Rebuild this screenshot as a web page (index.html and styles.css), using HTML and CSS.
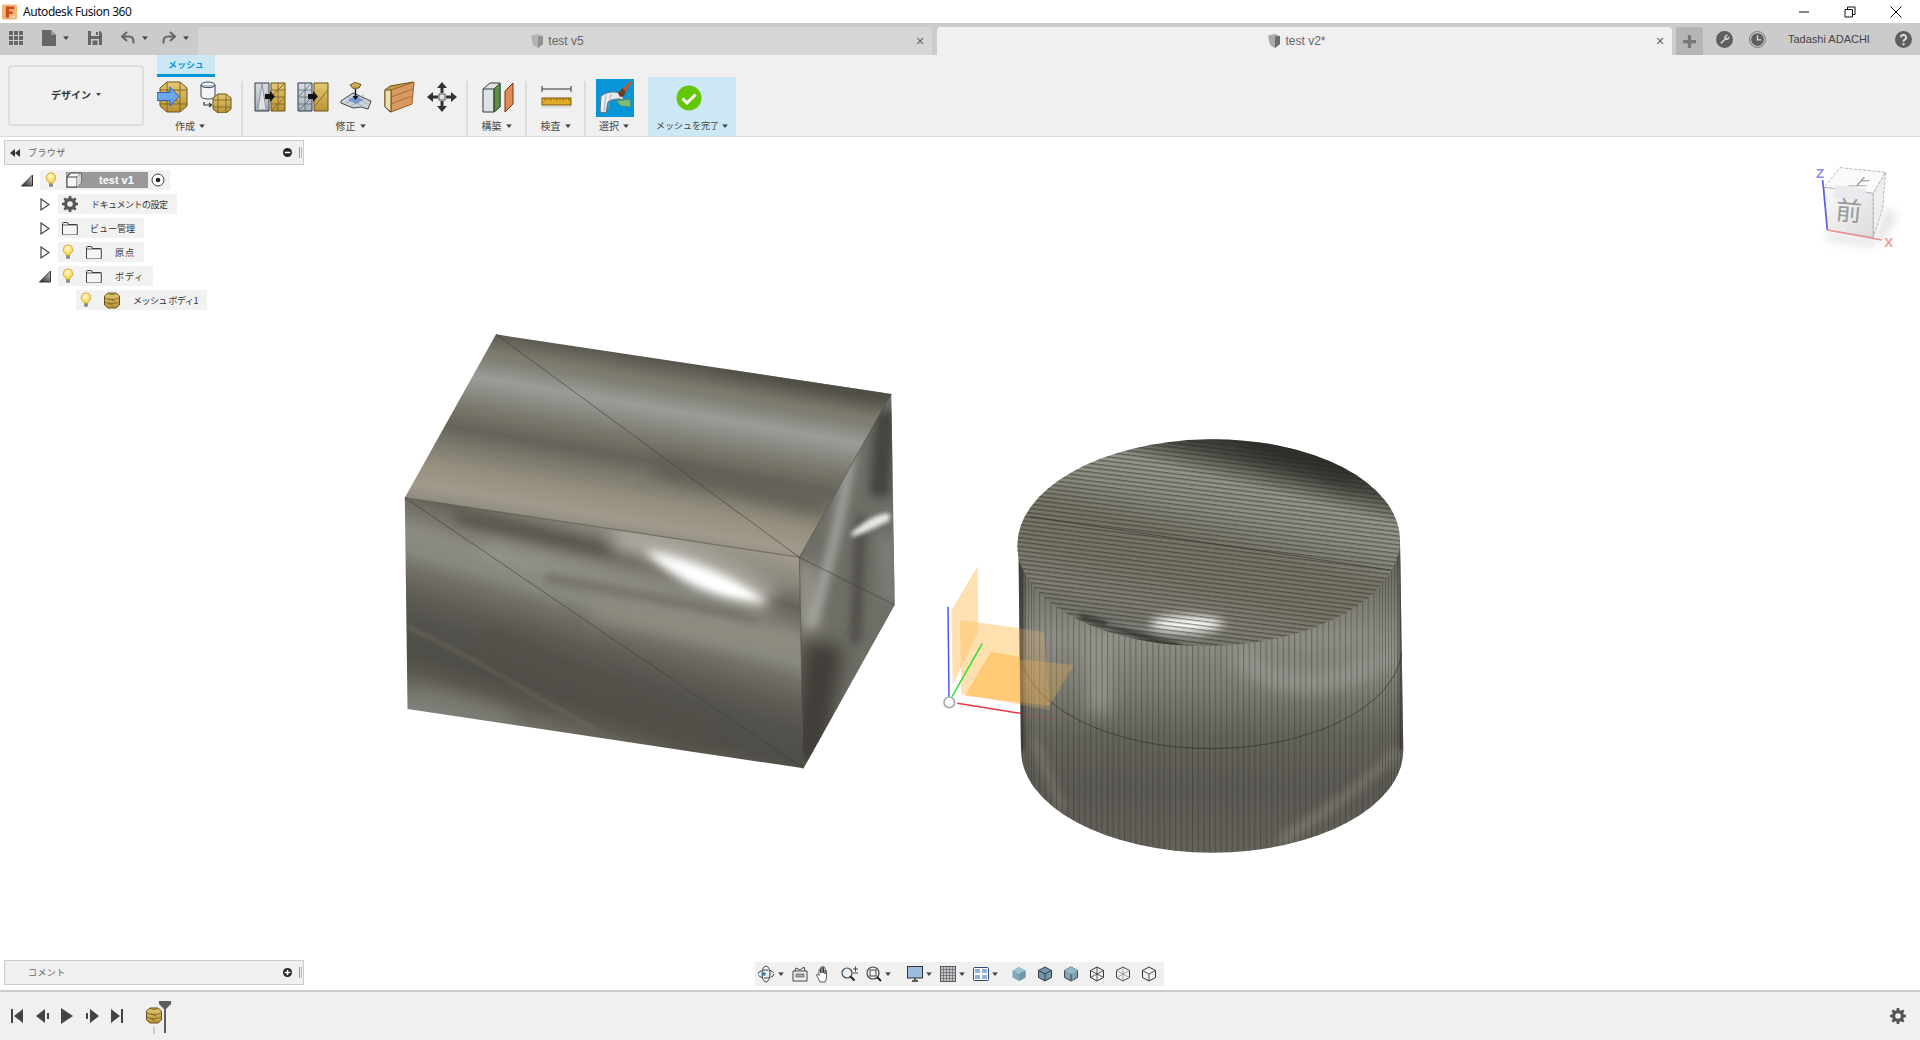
FILE: index.html
```html
<!DOCTYPE html>
<html lang="ja">
<head>
<meta charset="utf-8">
<title>Autodesk Fusion 360</title>
<link rel="stylesheet" href="styles.css">
</head>
<body>
<svg class="defs" width="0" height="0">
  <defs>
    <linearGradient id="gold" x1="0" y1="0" x2="0" y2="1"><stop offset="0" stop-color="#e3c873"/><stop offset="1" stop-color="#bb9338"/></linearGradient>
    <linearGradient id="steel" x1="0" y1="0" x2="0" y2="1"><stop offset="0" stop-color="#d8dde3"/><stop offset="1" stop-color="#a5adb7"/></linearGradient>
    <radialGradient id="bulbg" cx=".45" cy=".35" r=".65"><stop offset="0" stop-color="#fffbd0"/><stop offset="1" stop-color="#f3cc3a"/></radialGradient>
    <symbol id="caret" viewBox="0 0 8 5"><path d="M0 0h8L4 5z" fill="#444"/></symbol>
    <symbol id="bulb" viewBox="0 0 12 16"><path d="M6 .8a4.9 4.9 0 0 0-2.6 9c.5.4.6 1 .6 1.6h4c0-.6.1-1.200.6-1.600A4.900 4.900 0 0 0 6 .8z" fill="url(#bulbg)" stroke="#c9a52a" stroke-width=".8"/><path d="M4 11.500h4v2.200L7 15H5l-1-1.300z" fill="#8d8d8d"/></symbol>
    <symbol id="folder" viewBox="0 0 16 13"><path d="M.5 1.500a1 1 0 0 1 1-1h4l1 2h8a.8.8 0 0 1 .8.800v8.700a1 1 0 0 1-1 1h-12.800a1 1 0 0 1-1-1z" fill="#f4f6f8" stroke="#3d3d3d"/><path d="M.5 3h15" stroke="#3d3d3d" stroke-width=".8"/></symbol>
    <symbol id="tri-open" viewBox="0 0 12 13"><path d="M11.500 1v11H.5z" fill="url(#triFill)" stroke="#333"/></symbol>
    <linearGradient id="triFill" x1="0" y1="1" x2="1" y2="0"><stop offset="0" stop-color="#222"/><stop offset="1" stop-color="#ccc"/></linearGradient>
    <symbol id="tri-closed" viewBox="0 0 10 13"><path d="M1 1l8 5.500L1 12z" fill="#fff" stroke="#444" stroke-width="1.200"/></symbol>
    <symbol id="meshbody" viewBox="0 0 16 17"><path d="M4 1h8l3.500 3v9L12 16H4L.5 13V4z" fill="url(#gold)" stroke="#6b5217"/><path d="M1 6c3 2 11 2 14 0M1 10c3 2 11 2 14 0M4 1c2 2 6 2 8 0" fill="none" stroke="#7a5e1c" stroke-width=".8"/><path d="M5 6.500l6 3M4 11l5 3" stroke="#7a5e1c" stroke-width=".7"/></symbol>
    <symbol id="cubeiso" viewBox="0 0 16 16"><path d="M8 1l6.500 3.500v7L8 15l-6.500-3.500v-7z" fill="none" stroke="#333"/><path d="M1.500 4.500L8 8l6.500-3.500M8 8v7" fill="none" stroke="#333" stroke-width=".8"/></symbol>
  </defs>
</svg>

<header class="titlebar">
  <svg class="logo" viewBox="0 0 16 16" width="15" height="16"><rect width="16" height="16" rx="1" fill="#f3b57c"/><path d="M4 2h9v3H7.500v2.500h4v2.500h-4V14H4z" fill="#c9501a"/><path d="M8 12h6v2H8z" fill="#f7d2ae"/></svg>
  <span class="apptitle">Autodesk Fusion 360</span>
  <div class="winctl">
    <svg viewBox="0 0 12 12" width="12" height="12"><path d="M1 6h10" stroke="#111"/></svg>
    <svg viewBox="0 0 12 12" width="12" height="12"><path d="M1 3.500h7.500V11H1zM3.500 3.500V1H11v7.500H8.500" fill="none" stroke="#111"/></svg>
    <svg viewBox="0 0 12 12" width="12" height="12"><path d="M.5.500l11 11M11.500.5l-11 11" stroke="#111"/></svg>
  </div>
</header>

<nav class="toolbar">
  <div class="qat">
    <svg class="q-grid" viewBox="0 0 14 14" width="14" height="14"><path d="M0 0h4v4H0zM5 0h4v4H5zM10 0h4v4h-4zM0 5h4v4H0zM5 5h4v4H5zM10 5h4v4h-4zM0 10h4v4H0zM5 10h4v4H5zM10 10h4v4h-4z" fill="#666"/></svg>
    <svg class="q-file" viewBox="0 0 14 16" width="14" height="16"><path d="M0 0h9l5 5v11H0z" fill="#666"/><path d="M9 0v5h5" fill="#9a9a9a"/></svg>
    <svg class="q-caret" viewBox="0 0 8 5" width="6" height="4"><use href="#caret"/></svg>
    <svg class="q-save" viewBox="0 0 14 14" width="14" height="14"><path d="M0 0h12l2 2v12H0z" fill="#666"/><path d="M3 0h8v5H3zM3 8h8v6H3z" fill="#cbcbcb"/><path d="M8 1h2v3H8zM4.500 9.500h5v4.500h-5z" fill="#666"/></svg>
    <svg class="q-undo" viewBox="0 0 14 14" width="14" height="14"><path d="M6 1L1 5.500 6 10M1.500 5.500H8c3 0 4.500 2 4.500 5v2" fill="none" stroke="#666" stroke-width="2"/></svg>
    <svg class="q-caret" viewBox="0 0 8 5" width="6" height="4"><use href="#caret"/></svg>
    <svg class="q-redo" viewBox="0 0 14 14" width="14" height="14"><path d="M8 1l5 4.500L8 10M12.500 5.500H6c-3 0-4.500 2-4.500 5v2" fill="none" stroke="#666" stroke-width="2"/></svg>
    <svg class="q-caret" viewBox="0 0 8 5" width="6" height="4"><use href="#caret"/></svg>
  </div>
  <div class="tab">
    <div class="tab-title">
      <svg viewBox="0 0 14 16" width="14" height="16"><path d="M1 2.500L8 1l5 2v8l-5 4-5-3z" fill="#b3b3b3"/><path d="M8 3.500l5-.5v8l-5 4z" fill="#8f8f8f"/></svg>
      <span>test v5</span>
    </div>
    <span class="tab-x">✕</span>
  </div>
  <div class="tab active">
    <div class="tab-title">
      <svg viewBox="0 0 14 16" width="14" height="16"><path d="M1 2.500L8 1l5 2v8l-5 4-5-3z" fill="#a9a9a9"/><path d="M8 3.500l5-.5v8l-5 4z" fill="#6c6c6c"/></svg>
      <span>test v2*</span>
    </div>
    <span class="tab-x">✕</span>
  </div>
  <div class="tool-right">
    <div class="plus"><svg viewBox="0 0 12 12" width="13" height="13"><path d="M6 0v12M0 6h12" stroke="#777" stroke-width="3"/></svg></div>
    <svg class="r-wrench" viewBox="0 0 16 16" width="17" height="17"><circle cx="8" cy="8" r="8" fill="#5e5e5e"/><path d="M11.500 3.500a3 3 0 0 0-3.700 3.800L4 11l1.200 1.200 3.700-3.800a3 3 0 0 0 3.800-3.700L10.500 6.800 9.400 5.700z" fill="#cbcbcb"/></svg>
    <svg class="r-clock" viewBox="0 0 16 16" width="17" height="17"><circle cx="8" cy="8" r="7.500" fill="none" stroke="#666" stroke-width=".8"/><circle cx="8" cy="8" r="6" fill="#5e5e5e"/><path d="M8 4v4.300h3.500" fill="none" stroke="#ddd" stroke-width="1.200"/></svg>
    <span class="username">Tadashi ADACHI</span>
    <svg class="r-help" viewBox="0 0 16 16" width="17" height="17"><circle cx="8" cy="8" r="8" fill="#5e5e5e"/><path d="M5.500 6a2.500 2.300 0 1 1 3.600 2.100C8.300 8.600 8 9 8 10" fill="none" stroke="#ddd" stroke-width="1.800"/><circle cx="8" cy="12.300" r="1.100" fill="#ddd"/></svg>
  </div>
</nav>

<section class="ribbon">
  <button class="design">デザイン<svg viewBox="0 0 8 5" width="5" height="3"><use href="#caret"/></svg></button>
  <div class="ribbon-main">
    <div class="ribbon-tabs"><span class="mesh-tab">メッシュ</span></div>
    <div class="groups">
      <div class="group g-create">
        <div class="icons">
          <svg viewBox="0 0 32 32" width="32" height="32"><path d="M10 1h13l7 6v18l-7 6H10l-7-6V7z" fill="url(#gold)" stroke="#6b5217"/><path d="M10 1v30M23 1v30M3 9h27M3 23h27M10 9l13 14" stroke="#7a5e1c" stroke-width=".9" fill="none"/><path d="M0 11.500h13V6l9 9.500-9 9.500v-5.500H0z" fill="#6ba6f0" stroke="#2f5fae"/></svg>
          <svg viewBox="0 0 32 32" width="32" height="32"><path d="M1 4c0-4 14-4 14 0v11c0 4-14 4-14 0z" fill="#f2f4f6" stroke="#3a4654"/><path d="M1 4c0 3.500 14 3.500 14 0" fill="#b9c4d0" stroke="#3a4654"/><path d="M4 21v3h7M9 22l2.500 2L9 26" fill="none" stroke="#333" stroke-width="1.200"/><path d="M18 13h8l5 4v11l-5 4h-8l-5-4V17z" fill="url(#gold)" stroke="#6b5217"/><path d="M18 13v19M26 13v19M13 19h18M13 26h18" stroke="#7a5e1c" stroke-width=".8"/></svg>
        </div>
        <div class="label">作成<svg viewBox="0 0 8 5" width="6" height="4"><use href="#caret"/></svg></div>
      </div>
      <div class="group g-modify">
        <div class="icons">
          <svg viewBox="0 0 32 32" width="32" height="32"><path d="M1 2h14v28H1z" fill="url(#steel)" stroke="#2e3a47"/><path d="M4 28L8 3l4 25" fill="#dfe3e8" stroke="#7d8791" stroke-width=".8"/><path d="M17 2h14v28H17z" fill="url(#gold)" stroke="#6b5217"/><path d="M17 9h14M17 16h14M17 23h14M24 2v28M17 16l7-7M24 23l7-7M17 30l7-7M24 9l7-7" stroke="#7a5e1c" stroke-width=".8" fill="none"/><path d="M11 13h5v-3l5 5.500-5 5.500v-3h-5z" fill="#111"/></svg>
          <svg viewBox="0 0 32 32" width="32" height="32"><path d="M1 2h14v28H1z" fill="url(#steel)" stroke="#2e3a47"/><path d="M1 9h14M1 16h14M1 23h14M8 2v28M1 16l7-7M8 23l7-7M1 30l7-7M8 9l7-7" stroke="#5f6973" stroke-width=".8" fill="none"/><path d="M17 2h14v28H17z" fill="url(#gold)" stroke="#6b5217"/><path d="M17 26L31 9" stroke="#8d6e22"/><path d="M11 13h5v-3l5 5.500-5 5.500v-3h-5z" fill="#111"/></svg>
          <svg viewBox="0 0 32 32" width="32" height="32"><path d="M1 20l12-8 18 8-3 8-7-2-8 1-12-5z" fill="#cbd2dd" stroke="#444"/><path d="M8 19l7-4 8 4-7 4z" fill="#6c97dd"/><path d="M6 22l18-8M11 25l14-8M8 16l14 9M14 13l13 10" stroke="#8a929e" stroke-width=".6"/><path d="M10 4l5-2.500 6 2-2 3.500-6 .5z" fill="url(#gold)" stroke="#6b5217"/><path d="M15.500 8v9" stroke="#111" stroke-width="1.400"/><path d="M12.500 15h6l-3 4z" fill="#111"/></svg>
          <svg viewBox="0 0 32 32" width="32" height="32"><path d="M2 9l5-4 23-4-2 22-21 8-5-5z" fill="#c99a4d" stroke="#6b5217"/><path d="M8 9l23-8-2 22-21 8z" fill="#d79a60" stroke="#9d5f27"/><path d="M8 16l22-8M8 23l21-8" stroke="#a36a35" stroke-width=".9"/><path d="M2 9l6 0v22l-6-5z" fill="#f0e0b0" stroke="#6b5217"/></svg>
          <svg viewBox="0 0 32 32" width="32" height="32"><path d="M16 1l5 6h-3.500v5h-3V7H11zM16 31l-5-6h3.500v-5h3v5H21zM1 16l6-5v3.500h5v3H7V21zM31 16l-6 5v-3.500h-5v-3h5V11z" fill="#333"/><rect x="13" y="13" width="6" height="6" fill="#dfe3e8" stroke="#555"/></svg>
        </div>
        <div class="label">修正<svg viewBox="0 0 8 5" width="6" height="4"><use href="#caret"/></svg></div>
      </div>
      <div class="group g-build">
        <div class="icons">
          <svg viewBox="0 0 32 32" width="32" height="32"><path d="M1 8l7-6h10v24l-6 5H1z" fill="#dfe3e6" stroke="#2f3a3f"/><path d="M12 8l6-6v24l-6 5z" fill="#5a9048" stroke="#2f5a25"/><path d="M1 8h11v23" fill="none" stroke="#2f3a3f"/><path d="M23 10l8-8v21l-8 8z" fill="#e38b55" stroke="#7a2f10"/></svg>
        </div>
        <div class="label">構築<svg viewBox="0 0 8 5" width="6" height="4"><use href="#caret"/></svg></div>
      </div>
      <div class="group g-inspect">
        <div class="icons">
          <svg viewBox="0 0 32 32" width="32" height="32"><path d="M1 5v6M1 8h29M30 5v6" stroke="#333" fill="none"/><rect x="1" y="17" width="29" height="7" fill="#e0ab25" stroke="#7b5a12"/><path d="M4 17v3M7 17v2M10 17v3M13 17v2M16 17v3M19 17v2M22 17v3M25 17v2M28 17v3" stroke="#7b5a12" stroke-width=".8"/><path d="M1 26h29" stroke="#ddd" stroke-width="2"/></svg>
        </div>
        <div class="label">検査<svg viewBox="0 0 8 5" width="6" height="4"><use href="#caret"/></svg></div>
      </div>
      <div class="group g-select">
        <div class="icons">
          <svg viewBox="0 0 38 38" width="38" height="38"><rect width="38" height="38" fill="#0696d7"/><path d="M20 22l14-2 1 8-10-1z" fill="#7cbc78" stroke="#4a7a4a" stroke-width=".6"/><path d="M5 17c7-5 15-5 20-2l3 6c-5-2-12-1-16 2l-2 11-6-1z" fill="#e8ebef" stroke="#67717b"/><path d="M10 16l-2 16M15 15l-3 16" stroke="#8f99a3" stroke-width=".7"/><path d="M22 14l5-5 3 3-2 5-4 1z" fill="#6a3f1e"/><path d="M27 10l7-8 2 1-6 10z" fill="#c2552e"/></svg>
        </div>
        <div class="label">選択<svg viewBox="0 0 8 5" width="6" height="4"><use href="#caret"/></svg></div>
      </div>
      <div class="group g-finish">
        <div class="icons">
          <svg viewBox="0 0 26 26" width="26" height="26"><circle cx="13" cy="13" r="12.500" fill="#63c606"/><path d="M6.500 13.500l4.500 4.500 8.500-8.500" fill="none" stroke="#fff" stroke-width="3"/></svg>
        </div>
        <div class="label">メッシュを完了<svg viewBox="0 0 8 5" width="6" height="4"><use href="#caret"/></svg></div>
      </div>
    </div>
  </div>
</section>

<main class="viewport">
  <svg class="scene" viewBox="0 137 1920 853" width="1920" height="853">
    <defs>
      <filter id="b6" filterUnits="userSpaceOnUse" x="-100" y="-100" width="1900" height="1700"><feGaussianBlur stdDeviation="6"/></filter>
      <filter id="b14" filterUnits="userSpaceOnUse" x="-100" y="-100" width="1900" height="1700"><feGaussianBlur stdDeviation="14"/></filter>
      <filter id="b26" filterUnits="userSpaceOnUse" x="-100" y="-100" width="1900" height="1700"><feGaussianBlur stdDeviation="26"/></filter>
      <linearGradient id="boxTop" gradientUnits="userSpaceOnUse" x1="0" y1="0" x2="-104.600" y2="581">
        <stop offset="0" stop-color="#56544c"/><stop offset=".08" stop-color="#726f65"/><stop offset=".11" stop-color="#7d7a6c"/><stop offset=".15" stop-color="#807f76"/><stop offset=".25" stop-color="#9a9d97"/><stop offset=".32" stop-color="#8c8d86"/><stop offset=".43" stop-color="#777469"/><stop offset=".52" stop-color="#65635a"/><stop offset=".62" stop-color="#7d7a6e"/><stop offset=".73" stop-color="#96907f"/><stop offset=".84" stop-color="#a09a8c"/><stop offset=".93" stop-color="#8a877a"/>
      </linearGradient>
      <linearGradient id="boxFront" gradientUnits="userSpaceOnUse" x1="0" y1="0" x2="-330" y2="1101">
        <stop offset=".32" stop-color="#a09a8c"/><stop offset=".39" stop-color="#87857a"/><stop offset=".44" stop-color="#66645a"/><stop offset=".49" stop-color="#7c7a70"/><stop offset=".53" stop-color="#8c8b82"/><stop offset=".58" stop-color="#888880"/><stop offset=".63" stop-color="#706e66"/><stop offset=".69" stop-color="#5e5c55"/><stop offset=".75" stop-color="#54524c"/><stop offset=".83" stop-color="#4f4d47"/><stop offset=".88" stop-color="#5a5850"/><stop offset=".925" stop-color="#6e6c62"/><stop offset=".96" stop-color="#7c7d77"/><stop offset="1" stop-color="#8a8c86"/>
      </linearGradient>
      <linearGradient id="cylTop" gradientUnits="userSpaceOnUse" x1="950" y1="60" x2="780" y2="680">
        <stop offset="0" stop-color="#34332f"/><stop offset=".08" stop-color="#4a4943"/><stop offset=".2" stop-color="#929389"/><stop offset=".33" stop-color="#8d8d83"/><stop offset=".5" stop-color="#767467"/><stop offset=".7" stop-color="#787568"/><stop offset=".85" stop-color="#807e74"/><stop offset="1" stop-color="#72726c"/>
      </linearGradient>
      <linearGradient id="cylSide" gradientUnits="userSpaceOnUse" x1="0" y1="400" x2="0" y2="1300">
        <stop offset="0" stop-color="#66655c"/><stop offset=".28" stop-color="#8e8e86"/><stop offset=".44" stop-color="#7f7e75"/><stop offset=".61" stop-color="#65645c"/><stop offset=".78" stop-color="#5c5a54"/><stop offset="1" stop-color="#64625a"/>
      </linearGradient>
      <pattern id="hatchH" patternUnits="userSpaceOnUse" width="60" height="13" patternTransform="rotate(7)"><rect width="60" height="4" fill="#26251f" opacity=".48"/></pattern>
      <pattern id="hatchV" patternUnits="userSpaceOnUse" width="17" height="60"><rect width="3.500" height="60" fill="#26251f" opacity=".32"/></pattern>
      <pattern id="hatchVn" patternUnits="userSpaceOnUse" width="9" height="60"><rect width="3" height="60" fill="#26251f" opacity=".32"/></pattern>
      <clipPath id="clipTop"><path d="M337 73L1485 252 1218 742 72 563z"/></clipPath>
      <clipPath id="clipFront"><path d="M72 563L1218 742 1230 1375 80 1197z"/></clipPath>
      <clipPath id="clipRight"><path d="M1485 252L1495 885 1230 1375 1218 742z"/></clipPath>
      <clipPath id="clipSide"><path d="M295 380L303 990A573.500 308 0 0 0 1450 990L1440 360z"/></clipPath>
      <clipPath id="clipCylTop"><ellipse cx="866" cy="368" rx="574" ry="310" transform="rotate(-1 866 368)"/></clipPath>
      <linearGradient id="cubeFront" x1="0" y1="0" x2="1" y2="1"><stop offset="0" stop-color="#fafafa"/><stop offset="1" stop-color="#dcdcdc"/></linearGradient>
    </defs>

    <g transform="translate(380 310) scale(.3443 .33333)">
      <path d="M337 73L1485 252 1218 742 72 563z" fill="url(#boxTop)"/>
      <path d="M72 563L1218 742 1230 1375 80 1197z" fill="url(#boxFront)"/>
      <path d="M1485 252L1495 885 1230 1375 1218 742z" fill="#6e6d66"/>
      <g clip-path="url(#clipTop)">
        <path d="M1000 140L1480 240" stroke="#4e4c45" stroke-width="70" filter="url(#b26)"/>
        <path d="M800 470L1300 590" stroke="#5f5d53" stroke-width="50" filter="url(#b26)"/>
      </g>
      <g clip-path="url(#clipFront)" fill="none">
        <path d="M220 620L760 745" stroke="#5b5950" stroke-width="36" filter="url(#b14)"/>
        <path d="M300 715L1100 890" stroke="#9b9b94" stroke-width="30" filter="url(#b26)"/>
        <path d="M480 800L1100 930" stroke="#68665d" stroke-width="20" filter="url(#b14)"/>
        <path d="M620 900L1220 1010" stroke="#908d80" stroke-width="50" filter="url(#b26)"/>
        <path d="M80 950C250 1030 450 1160 620 1255" stroke="#8e8b7c" stroke-width="7" opacity=".45" filter="url(#b6)"/>
        <path d="M90 1150C150 1175 260 1180 380 1240" stroke="#85867f" stroke-width="50" opacity=".6" filter="url(#b26)"/>
        <path d="M300 980L950 1300" stroke="#52504a" stroke-width="70" filter="url(#b26)"/>
        <path d="M680 680C850 710 1020 790 1130 870" stroke="#aaa89f" stroke-width="90" filter="url(#b26)"/>
        <path d="M770 720C880 735 1040 800 1125 878 1000 872 870 835 770 720z" fill="#fff" filter="url(#b14)"/>
        <path d="M880 780C950 795 1030 825 1085 862 1000 852 930 825 880 780z" fill="#fff" opacity=".85" filter="url(#b6)"/>
      </g>
      <g clip-path="url(#clipRight)" fill="none">
        <path d="M1290 1000L1240 1370" stroke="#3f3e39" stroke-width="110" filter="url(#b26)"/>
        <path d="M1240 760L1240 960" stroke="#a19e93" stroke-width="50" filter="url(#b26)"/>
        <path d="M1470 300L1450 560" stroke="#45443f" stroke-width="60" filter="url(#b14)"/>
        <path d="M1470 680L1480 870" stroke="#7c7c76" stroke-width="50" filter="url(#b14)"/>
        <path d="M1370 420C1350 560 1320 720 1250 950" stroke="#a8aaa6" stroke-width="26" filter="url(#b14)"/>
        <path d="M1400 620C1390 720 1390 820 1380 1000" stroke="#484742" stroke-width="26" filter="url(#b14)"/>
        <path d="M1370 668C1400 640 1440 610 1480 610L1480 632C1440 650 1410 670 1370 680z" fill="#e8e8e6" filter="url(#b6)"/>
      </g>
      <path d="M337 73L1218 742M72 563L1230 1375M1218 742L1495 885M1485 252L1218 742M72 563L1218 742M1218 742L1230 1375" stroke="#3f3d36" stroke-width="2.400" opacity=".75" fill="none"/>
    </g>

    <g transform="translate(930 560) scale(.33333)">
      <g>
        <path d="M143 18L145 215 68 375 64 152z" fill="#ffcf85" opacity=".65"/>
        <path d="M90 180L342 215 360 450 94 402z" fill="#ffc66e" opacity=".55"/>
        <path d="M182 276L432 315 358 437 105 407z" fill="#ffb94f" opacity=".6"/>
      </g>
      <path d="M54 140L57 410" stroke="#4a5cf0" stroke-width="4.500"/>
      <path d="M157 250L66 410" stroke="#2fe02f" stroke-width="4.500"/>
      <path d="M82 430L380 477" stroke="#f03244" stroke-width="4.500"/>
    </g>

    <g transform="translate(920 420) scale(.33333)">
      <path d="M295 380L303 990A573.500 308 0 0 0 1450 990L1440 360z" fill="url(#cylSide)"/>
      <g clip-path="url(#clipSide)" fill="none">
        <path d="M950 700C1050 800 1200 830 1440 700" stroke="#9a9a94" stroke-width="46" filter="url(#b26)"/>
        <path d="M540 640L540 880" stroke="#96968e" stroke-width="60" filter="url(#b26)"/>
        <path d="M1080 1265C1200 1180 1340 1100 1430 990" stroke="#959284" stroke-width="26" opacity=".55" filter="url(#b14)"/>
        <path d="M340 950C370 1030 400 1100 430 1170" stroke="#959284" stroke-width="20" opacity=".55" filter="url(#b14)"/>
        <path d="M303 430V990" stroke="#2d2c28" stroke-width="14" filter="url(#b6)"/>
        <path d="M1445 400V990" stroke="#2d2c28" stroke-width="10" filter="url(#b6)"/>
        <rect x="340" y="380" width="1030" height="940" fill="url(#hatchV)"/>
        <rect x="290" y="380" width="50" height="900" fill="url(#hatchVn)"/>
        <rect x="1370" y="380" width="90" height="900" fill="url(#hatchVn)"/>
      </g>
      <path d="M300 700A574 308 0 0 0 1445 700" fill="none" stroke="#2f2e29" stroke-width="2.500" opacity=".8"/>
      <ellipse cx="866" cy="368" rx="574" ry="310" transform="rotate(-1 866 368)" fill="url(#cylTop)"/>
      <g clip-path="url(#clipCylTop)" fill="none">
        <path d="M1000 70C1100 90 1220 130 1300 170" stroke="#2f2e2a" stroke-width="50" filter="url(#b26)"/>
        <path d="M480 590C600 620 680 660 780 680" stroke="#3d3c37" stroke-width="18" filter="url(#b6)"/>
        <path d="M560 610C660 620 720 640 850 650" stroke="#8a8b85" stroke-width="12" filter="url(#b6)"/>
        <ellipse cx="800" cy="612" rx="110" ry="24" fill="#fff" filter="url(#b14)"/>
        <rect x="280" y="40" width="1180" height="650" fill="url(#hatchH)"/>
      </g>
      <path d="M330 290L1410 450" stroke="#2b2a26" stroke-width="2.500" opacity=".7" fill="none"/>
    </g>

    <g transform="translate(930 560) scale(.33333)">
      <path d="M266 205L342 215 360 450 266 434z" fill="#ffc66e" opacity=".22"/>
      <path d="M266 298L432 315 358 437 266 426z" fill="#ffb94f" opacity=".26"/>
      <path d="M270 462L380 477" stroke="#f03244" stroke-width="2" opacity=".4"/>
      <circle cx="58" cy="427" r="16" fill="#fff" stroke="#a9a9a9" stroke-width="5"/>
    </g>

    <g transform="translate(1640 0) scale(.33333)">
      <path d="M560 695L725 722 770 650 740 620 700 740 560 720z" fill="#bdbdbd" opacity=".45" filter="url(#b14)"/>
      <path d="M600 503L737 517 700 580 552 562z" fill="#fafafa" stroke="#9a9a9a" stroke-width="2" stroke-dasharray="10 4"/>
      <path d="M552 562L700 580 700 712 562 690z" fill="url(#cubeFront)" stroke="#9a9a9a" stroke-width="2"/>
      <path d="M737 517L728 625 700 712 700 580z" fill="#efefef" stroke="#9a9a9a" stroke-width="2" stroke-dasharray="10 4"/>
      <path d="M585 555L680 567 675 605 580 595z" fill="#e9ebee"/>
      <text class="cube-top" transform="translate(622 557) scale(1 .55) skewX(-25)">上</text>
      <text class="cube-front" transform="translate(585 658) rotate(5)">前</text>
      <path d="M548 540L562 690" stroke="#5960e8" stroke-width="5"/>
      <path d="M562 690L725 720" stroke="#ef8f8f" stroke-width="5"/>
      <text class="axis-z" x="528" y="534">Z</text>
      <text class="axis-x" x="733" y="740">X</text>
    </g>
  </svg>

  <aside class="panel browser">
    <div class="panel-head">
      <svg class="rew" viewBox="0 0 10 8" width="10" height="8"><path d="M5 0v8L0 4zM10 0v8L5 4z" fill="#333"/></svg>
      <span class="panel-title">ブラウザ</span>
      <svg class="pm" viewBox="0 0 8 8" width="9" height="9"><circle cx="4" cy="4" r="4" fill="#222"/><path d="M1.500 4h5" stroke="#fff" stroke-width="1.400"/></svg>
      <span class="grip"></span>
    </div>
    <ul class="tree">
      <li class="row l0">
        <svg class="tri" viewBox="0 0 12 13" width="12" height="13"><use href="#tri-open"/></svg>
        <div class="chip chip-root">
          <svg class="ic" viewBox="0 0 12 16" width="12" height="16"><use href="#bulb"/></svg>
          <div class="comp">
            <svg viewBox="0 0 16 16" width="16" height="16"><path d="M1 5l4-4h10v10l-4 4H1z" fill="#f3f5f7" stroke="#444"/><path d="M1 5h10v10M11 5l4-4" fill="none" stroke="#444"/><path d="M11 5l4-4v10l-4 4z" fill="#d5d9de"/></svg>
            <span>test v1</span>
          </div>
          <svg class="radio" viewBox="0 0 14 14" width="14" height="14"><circle cx="7" cy="7" r="6" fill="#fff" stroke="#444"/><circle cx="7" cy="7" r="2.300" fill="#222"/></svg>
        </div>
      </li>
      <li class="row l1">
        <svg class="tri closed" viewBox="0 0 10 13" width="10" height="13"><use href="#tri-closed"/></svg>
        <div class="chip">
          <svg class="ic" viewBox="0 0 16 16" width="16" height="16"><path d="M6.800 0h2.400l.4 2.200 1.500.6L12.900 1.500l1.600 1.600-1.300 1.800.6 1.500 2.200.4v2.400l-2.200.4-.6 1.500 1.300 1.800-1.600 1.600-1.800-1.300-1.500.6-.4 2.200H6.800l-.4-2.200-1.500-.6-1.800 1.300-1.600-1.600 1.300-1.800-.6-1.500L0 9.200V6.800l2.200-.4.6-1.500L1.500 3.100l1.600-1.600 1.800 1.300 1.500-.6z" fill="#555"/><circle cx="8" cy="8" r="2.800" fill="#f2f2f2"/></svg>
          <span class="node docs">ドキュメントの設定</span>
        </div>
      </li>
      <li class="row l1">
        <svg class="tri closed" viewBox="0 0 10 13" width="10" height="13"><use href="#tri-closed"/></svg>
        <div class="chip">
          <svg class="ic" viewBox="0 0 16 13" width="16" height="13"><use href="#folder"/></svg>
          <span class="node views">ビュー管理</span>
        </div>
      </li>
      <li class="row l1">
        <svg class="tri closed" viewBox="0 0 10 13" width="10" height="13"><use href="#tri-closed"/></svg>
        <div class="chip">
          <svg class="ic" viewBox="0 0 12 16" width="12" height="16"><use href="#bulb"/></svg>
          <svg class="ic2" viewBox="0 0 16 13" width="16" height="13"><use href="#folder"/></svg>
          <span class="node wide">原点</span>
        </div>
      </li>
      <li class="row l1">
        <svg class="tri sub-open" viewBox="0 0 12 13" width="12" height="13"><use href="#tri-open"/></svg>
        <div class="chip">
          <svg class="ic" viewBox="0 0 12 16" width="12" height="16"><use href="#bulb"/></svg>
          <svg class="ic2" viewBox="0 0 16 13" width="16" height="13"><use href="#folder"/></svg>
          <span class="node wide">ボディ</span>
        </div>
      </li>
      <li class="row l2">
        <div class="chip">
          <svg class="ic" viewBox="0 0 12 16" width="12" height="16"><use href="#bulb"/></svg>
          <svg class="ic2" viewBox="0 0 16 17" width="16" height="17"><use href="#meshbody"/></svg>
          <span class="node mesh">メッシュ ボディ1</span>
        </div>
      </li>
    </ul>
  </aside>

  <aside class="panel comments">
    <div class="panel-head">
      <span class="rew-space"></span>
      <span class="panel-title">コメント</span>
      <svg class="pm" viewBox="0 0 8 8" width="9" height="9"><circle cx="4" cy="4" r="4" fill="#222"/><path d="M1.500 4h5M4 1.500v5" stroke="#fff" stroke-width="1.400"/></svg>
      <span class="grip"></span>
    </div>
  </aside>

  <div class="navbar">
    <svg viewBox="0 0 18 18" width="18" height="18"><ellipse cx="9" cy="9" rx="8" ry="4" fill="none" stroke="#444" stroke-dasharray="5 1.500"/><ellipse cx="9" cy="9" rx="4" ry="8" fill="none" stroke="#444"/><path d="M5 9h4M7 7v4" stroke="#1a7fd0" stroke-width="1.400"/></svg>
    <svg class="navcaret" viewBox="0 0 8 5" width="6" height="4"><use href="#caret"/></svg>
    <svg viewBox="0 0 16 16" width="16" height="16"><path d="M1 5h14v10H1z" fill="#eee" stroke="#444"/><path d="M3 5l1-3 4 2 4-3 1 4" fill="none" stroke="#444"/><rect x="4" y="8" width="8" height="3" fill="#aaa" stroke="#444" stroke-width=".6"/></svg>
    <svg viewBox="0 0 16 17" width="16" height="17"><path d="M4 16c-1-3-3-5-3.500-7 0-1 1.500-1 2.500.5V4c0-1 1.500-1 1.500 0v3-5c0-1 1.500-1 1.500 0v5-6c0-1 1.500-1 1.500 0v6-5c0-1 1.500-1 1.500 0v6-3c0-1 1.500-1 1.500 0v6c0 2-1 4-1.500 5z" fill="#fff" stroke="#333" stroke-width=".8"/></svg>
    <svg viewBox="0 0 18 16" width="18" height="16"><circle cx="7" cy="7" r="5" fill="#e9f2f8" stroke="#444" stroke-width="1.200"/><path d="M10.500 10.500l4 4" stroke="#222" stroke-width="2"/><path d="M13 3h5M15.500.5v5M13 7h5" stroke="#444"/></svg>
    <svg viewBox="0 0 16 16" width="16" height="16"><circle cx="7" cy="7" r="6" fill="#f4f4f4" stroke="#444" stroke-width="1.200"/><rect x="4" y="4" width="6" height="6" fill="none" stroke="#444"/><path d="M11 11l4 4" stroke="#222" stroke-width="2"/></svg>
    <svg class="navcaret" viewBox="0 0 8 5" width="6" height="4"><use href="#caret"/></svg>
    <svg class="navgap" viewBox="0 0 16 16" width="16" height="16"><rect x=".5" y=".5" width="15" height="11.500" fill="#9dbde0" stroke="#333"/><path d="M5 15h6M8 12v3" stroke="#333" stroke-width="1.400"/></svg>
    <svg class="navcaret" viewBox="0 0 8 5" width="6" height="4"><use href="#caret"/></svg>
    <svg viewBox="0 0 16 16" width="16" height="16"><rect x=".5" y=".5" width="15" height="15" fill="#c5c5cc" stroke="#555"/><path d="M3.500 0v16M6.500 0v16M9.500 0v16M12.500 0v16M0 3.500h16M0 6.500h16M0 9.500h16M0 12.500h16" stroke="#666" stroke-width=".7"/></svg>
    <svg class="navcaret" viewBox="0 0 8 5" width="6" height="4"><use href="#caret"/></svg>
    <svg viewBox="0 0 16 14" width="16" height="14"><rect x=".5" y=".5" width="15" height="13" rx="1" fill="#fff" stroke="#2c4a78"/><path d="M2 2h5v4H2zM9 2h5v4H9zM2 8h5v4H2zM9 8h5v4H9z" fill="#93b1d8"/></svg>
    <svg class="navcaret" viewBox="0 0 8 5" width="6" height="4"><use href="#caret"/></svg>
    <div class="cubes">
      <svg viewBox="0 0 16 16" width="16" height="16"><path d="M8 1l6.500 3.500v7L8 15l-6.500-3.500v-7z" fill="#7fa8bd"/><path d="M8 1l6.500 3.500L8 8 1.500 4.500z" fill="#9fc2d4"/><path d="M8 8l6.500-3.500v7L8 15z" fill="#6e97ac"/></svg>
      <svg viewBox="0 0 16 16" width="16" height="16"><path d="M8 1l6.500 3.500v7L8 15l-6.500-3.500v-7z" fill="#7598a8" stroke="#2f3c44"/><path d="M1.500 4.500L8 8l6.500-3.500M8 8v7" fill="none" stroke="#2f3c44"/></svg>
      <svg viewBox="0 0 16 16" width="16" height="16"><path d="M8 1l6.500 3.500v7L8 15l-6.500-3.500v-7z" fill="#7ea3b4" stroke="#3d4a52"/><path d="M8 8L14.500 4.500 8 1 1.500 4.500z" fill="#95b7c6"/><path d="M8 8v7" stroke="#3d4a52"/></svg>
      <svg viewBox="0 0 16 16" width="16" height="16"><path d="M8 1l6.500 3.500v7L8 15l-6.500-3.500v-7z" fill="none" stroke="#333"/><path d="M1.500 4.500l13 7M14.500 4.500l-13 7M8 1v14" stroke="#333" stroke-width=".8"/></svg>
      <svg viewBox="0 0 16 16" width="16" height="16"><path d="M8 1l6.500 3.500v7L8 15l-6.500-3.500v-7z" fill="none" stroke="#444"/><path d="M1.500 4.500L8 8l6.500-3.500M8 8v7M8 1v7M1.500 11.500L8 8l6.500 3.500" fill="none" stroke="#888" stroke-width=".7"/></svg>
      <svg viewBox="0 0 16 16" width="16" height="16"><use href="#cubeiso"/></svg>
    </div>
  </div>
</main>

<footer class="timeline">
  <div class="transport">
    <svg viewBox="0 0 12 14" width="12" height="14"><path d="M0 0h2v14H0zM12 0v14L3 7z" fill="#444"/></svg>
    <svg viewBox="0 0 13 14" width="13" height="14"><path d="M9 0v14L0 7zM11 4h2v6h-2z" fill="#444"/></svg>
    <svg viewBox="0 0 12 16" width="12" height="16"><path d="M0 0l12 8-12 8z" fill="#444"/></svg>
    <svg viewBox="0 0 13 14" width="13" height="14"><path d="M4 0v14l9-7zM0 4h2v6H0z" fill="#444"/></svg>
    <svg viewBox="0 0 12 14" width="12" height="14"><path d="M0 0v14l9-7zM10 0h2v14h-2z" fill="#444"/></svg>
  </div>
  <div class="tl-track">
    <div class="tl-item">
      <svg viewBox="0 0 16 17" width="16" height="17"><use href="#meshbody"/></svg>
      <span class="tl-stem"></span>
    </div>
    <svg class="tl-marker" viewBox="0 0 12 32" width="12" height="32"><path d="M0 0h12v3L7 8v24H5V8L0 3z" fill="#5c5c5c"/></svg>
  </div>
  <svg class="tl-gear" viewBox="0 0 16 16" width="16" height="16"><path d="M6.800 0h2.400l.4 2.200 1.500.6L12.900 1.500l1.600 1.600-1.300 1.800.6 1.500 2.200.4v2.400l-2.200.4-.6 1.500 1.300 1.800-1.600 1.600-1.800-1.300-1.500.6-.4 2.200H6.800l-.4-2.200-1.500-.6-1.800 1.300-1.600-1.600 1.300-1.800-.6-1.500L0 9.200V6.800l2.200-.4.6-1.500L1.500 3.100l1.600-1.600 1.800 1.300 1.500-.6z" fill="#555"/><circle cx="8" cy="8" r="2.800" fill="#f0f0f0"/></svg>
</footer>
</body>
</html>
```

FILE: styles.css
```css
* { box-sizing: border-box; }
html, body { margin: 0; height: 100%; }
body {
  display: flex;
  flex-direction: column;
  height: 1040px;
  width: 1920px;
  overflow: hidden;
  background: #fff;
  font-family: "Noto Sans CJK JP", "Liberation Sans", sans-serif;
  color: #333;
}
svg { display: block; flex: none; }
.defs { position: absolute; }

.titlebar { height: 23px; flex: none; display: flex; align-items: center; background: #fff; padding-left: 2px; }
.apptitle { margin-left: 6px; font: 12px "Noto Sans", sans-serif; letter-spacing: -.45px; color: #111; }
.winctl { margin-left: auto; display: flex; gap: 34px; padding-right: 18px; }

.toolbar { height: 32px; flex: none; display: flex; align-items: flex-end; background: #cbcbcb; }
.qat { width: 198px; height: 32px; flex: none; display: flex; align-items: center; padding-left: 9px; padding-bottom: 2px; }
.q-file { margin-left: 19px; }
.q-caret { margin-left: 7px; }
.q-save { margin-left: 19px; }
.q-undo { margin-left: 19px; }
.q-redo { margin-left: 14px; }
.tab { width: 734px; height: 28px; flex: none; display: flex; align-items: center; background: #d6d6d6; border-radius: 4px 4px 0 0; padding: 0 5px 0 3px; margin-right: 5px; }
.tab.active { width: 735px; background: #f0f0f0; margin-right: 4px; }
.tab-title { flex: 1; display: flex; align-items: center; justify-content: center; gap: 4px; font: 12px "Liberation Sans", sans-serif; color: #666; }
.tab-x { font: 11px "DejaVu Sans", sans-serif; color: #666; width: 14px; text-align: center; }
.tool-right { flex: 1; height: 32px; display: flex; align-items: center; }
.plus { width: 27px; height: 28px; margin-top: 4px; background: #b5b5b5; border-radius: 3px 3px 0 0; display: flex; align-items: center; justify-content: center; }
.r-wrench { margin-left: 13px; }
.r-clock { margin-left: 16px; }
.username { margin-left: 22px; font: 11px "Liberation Sans", sans-serif; color: #444; white-space: nowrap; }
.r-help { margin-left: 25px; }

.ribbon { height: 82px; flex: none; display: flex; background: #f0f0f0; border-bottom: 1px solid #dcdcdc; padding-left: 8px; }
.design { width: 136px; height: 61px; margin-top: 10px; flex: none; display: flex; align-items: center; justify-content: center; gap: 5px; background: #f0f0f0; border: 2px solid #dddddd; border-radius: 4px; font: 700 10px "Noto Sans CJK JP", sans-serif; color: #333; padding: 0 0 2px; }
.ribbon-main { margin-left: 13px; display: flex; flex-direction: column; flex: 1; }
.ribbon-tabs { height: 22px; flex: none; }
.mesh-tab { display: block; width: 58px; height: 22px; background: #cce8f5; border-bottom: 3px solid #0696d7; color: #0696d7; font-weight: 700; font-size: 9px; line-height: 19px; text-align: center; }
.groups { display: flex; flex: 1; }
.group { display: flex; flex-direction: column; height: 55px; margin-top: 4px; border-right: 2px solid #dcdcdc; }
.icons { height: 38px; display: flex; gap: 11px; align-items: flex-start; }
.label { display: flex; align-items: center; justify-content: center; gap: 4px; font-size: 10px; line-height: 14px; color: #444; white-space: nowrap; }
.g-create { width: 86px; }
.g-create .label { padding-right: 18px; }
.g-modify { width: 225px; }
.g-modify .icons { padding-left: 11px; }
.g-modify .label { padding-right: 8px; }
.g-build { width: 59px; }
.g-build .icons, .g-inspect .icons { padding-left: 14px; }
.g-inspect { width: 59px; }
.g-select { width: 54px; border-right: none; margin-top: 2px; height: 57px; }
.g-select .icons { height: 40px; padding-left: 10px; }
.g-select .label { padding-left: 2px; }
.g-finish { width: 88px; height: 59px; margin: 0 0 0 8px; background: #cce8f5; border-right: none; padding-top: 8px; }
.g-finish .icons { height: 34px; padding-left: 28px; }
.g-finish .label { font-size: 9px; gap: 3px; }

.viewport { flex: 1; position: relative; min-height: 0; background: #fff; }
.scene { position: absolute; left: 0; top: 0; }
.cube-top { font: 400 60px "Noto Sans CJK JP", sans-serif; fill: #9c9c9c; }
.cube-front { font: 400 78px "Noto Sans CJK JP", sans-serif; fill: #9a9a9a; }
.axis-z { font: 700 40px "Liberation Sans", sans-serif; fill: #8c8cf0; }
.axis-x { font: 700 40px "Liberation Sans", sans-serif; fill: #f59a9a; }

.panel { position: absolute; left: 4px; width: 300px; }
.browser { top: 3px; }
.comments { bottom: 5px; }
.panel-head { height: 25px; display: flex; align-items: center; background: #f0f0f0; border: 1px solid #cccccc; padding-left: 5px; }
.rew { margin-right: 8px; }
.rew-space { width: 18px; flex: none; }
.panel-title { font-size: 9px; letter-spacing: .4px; color: #666; }
.pm { margin-left: auto; }
.grip { width: 3px; height: 11px; margin: 0 1px 0 7px; border-left: 1px solid #999; border-right: 1px solid #bbb; }

.tree { list-style: none; margin: 5px 0 0; padding: 0; }
.row { display: flex; align-items: center; height: 20px; margin-bottom: 4px; }
.l0 { margin-left: 17px; }
.l1 { margin-left: 36px; }
.l2 { margin-left: 72px; }
.tri { margin-right: 7px; }
.tri.closed { margin-right: 8px; }
.tri.sub-open { margin-left: -1px; margin-right: 7px; }
.chip { display: flex; align-items: center; height: 20px; background: #f2f2f2; padding: 0 9px 0 4px; font-size: 9px; color: #333; white-space: nowrap; }
.chip-root { padding-left: 5px; padding-right: 5px; }
.comp { display: flex; align-items: center; width: 82px; height: 16px; margin-left: 9px; background: #999999; color: #fff; font: 700 11px "Liberation Sans", sans-serif; }
.comp span { margin-left: 17px; }
.radio { margin-left: 3px; }
.ic2 { margin-left: 12px; }
.node { margin-left: 13px; }
.docs { letter-spacing: -.5px; }
.views { margin-left: 12px; }
.wide { margin-left: 13px; letter-spacing: 1px; }
.mesh { margin-left: 13px; letter-spacing: -.5px; }

.navbar { position: absolute; left: 755px; bottom: 4px; width: 409px; height: 24px; background: #f0f0f0; display: flex; align-items: center; padding-left: 2px; gap: 8px; }
.navcaret { margin-left: -5px; }
.navgap { margin-left: 8px; }
.cubes { margin-left: 5px; display: flex; gap: 10px; }

.timeline { height: 50px; flex: none; display: flex; align-items: center; background: #f0f0f0; border-top: 2px solid #cccccc; padding-left: 11px; }
.transport { display: flex; align-items: center; gap: 12.500px; }
.tl-track { display: flex; align-items: flex-start; margin-left: 23px; align-self: flex-start; padding-top: 9px; }
.tl-item { display: flex; flex-direction: column; align-items: center; margin-top: 6px; }
.tl-stem { width: 2px; height: 7px; margin-top: 3px; background: #cccccc; }
.tl-marker { margin-left: -3px; }
.tl-gear { margin-left: auto; margin-right: 14px; }
```
